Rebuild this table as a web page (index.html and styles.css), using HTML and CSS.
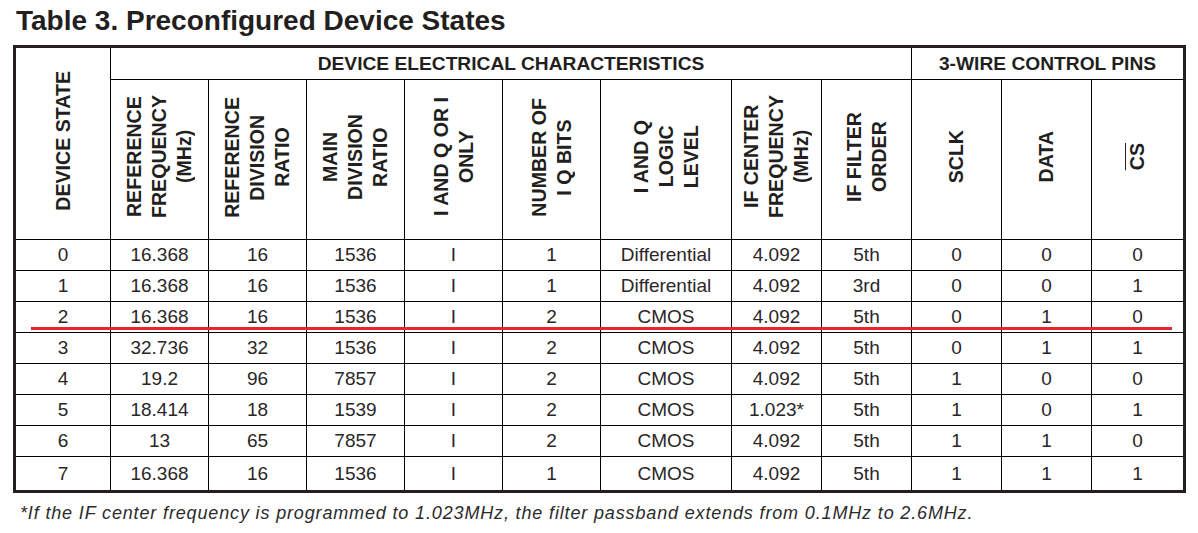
FILE: index.html
```html
<!DOCTYPE html>
<html lang="en">
<head>
<meta charset="utf-8">
<title>Table 3. Preconfigured Device States</title>
<link rel="stylesheet" href="styles.css">
</head>
<body>
<div class="page">
  <h1 class="title">Table 3. Preconfigured Device States</h1>
  <div class="table-wrap">
    <table class="states">
      <colgroup>
        <col class="c-state">
        <col class="c-main"><col class="c-main"><col class="c-main"><col class="c-main"><col class="c-main">
        <col class="c-logic">
        <col class="c-narrow"><col class="c-narrow"><col class="c-narrow"><col class="c-narrow"><col class="c-last">
      </colgroup>
      <thead>
        <tr class="group-row">
          <th rowspan="2" class="vcell"><span class="vtext">DEVICE STATE</span></th>
          <th colspan="8" class="group">DEVICE ELECTRICAL CHARACTERISTICS</th>
          <th colspan="3" class="group end">3-WIRE CONTROL PINS</th>
        </tr>
        <tr class="label-row">
          <th class="vcell"><span class="vtext">REFERENCE<br>FREQUENCY<br>(MHz)</span></th>
          <th class="vcell"><span class="vtext">REFERENCE<br>DIVISION<br>RATIO</span></th>
          <th class="vcell"><span class="vtext">MAIN<br>DIVISION<br>RATIO</span></th>
          <th class="vcell"><span class="vtext">I AND Q OR I<br>ONLY</span></th>
          <th class="vcell"><span class="vtext">NUMBER OF<br>I Q BITS</span></th>
          <th class="vcell"><span class="vtext">I AND Q<br>LOGIC<br>LEVEL</span></th>
          <th class="vcell"><span class="vtext">IF CENTER<br>FREQUENCY<br>(MHz)</span></th>
          <th class="vcell"><span class="vtext">IF FILTER<br>ORDER</span></th>
          <th class="vcell"><span class="vtext">SCLK</span></th>
          <th class="vcell"><span class="vtext">DATA</span></th>
          <th class="vcell end"><span class="vtext"><span class="bar">CS</span></span></th>
        </tr>
      </thead>
      <tbody>
        <tr><td>0</td><td>16.368</td><td>16</td><td>1536</td><td>I</td><td>1</td><td>Differential</td><td>4.092</td><td>5th</td><td>0</td><td>0</td><td class="end">0</td></tr>
        <tr><td>1</td><td>16.368</td><td>16</td><td>1536</td><td>I</td><td>1</td><td>Differential</td><td>4.092</td><td>3rd</td><td>0</td><td>0</td><td class="end">1</td></tr>
        <tr><td>2</td><td>16.368</td><td>16</td><td>1536</td><td>I</td><td>2</td><td>CMOS</td><td>4.092</td><td>5th</td><td>0</td><td>1</td><td class="end">0</td></tr>
        <tr><td>3</td><td>32.736</td><td>32</td><td>1536</td><td>I</td><td>2</td><td>CMOS</td><td>4.092</td><td>5th</td><td>0</td><td>1</td><td class="end">1</td></tr>
        <tr><td>4</td><td>19.2</td><td>96</td><td>7857</td><td>I</td><td>2</td><td>CMOS</td><td>4.092</td><td>5th</td><td>1</td><td>0</td><td class="end">0</td></tr>
        <tr><td>5</td><td>18.414</td><td>18</td><td>1539</td><td>I</td><td>2</td><td>CMOS</td><td>1.023*</td><td>5th</td><td>1</td><td>0</td><td class="end">1</td></tr>
        <tr><td>6</td><td>13</td><td>65</td><td>7857</td><td>I</td><td>2</td><td>CMOS</td><td>4.092</td><td>5th</td><td>1</td><td>1</td><td class="end">0</td></tr>
        <tr class="last"><td>7</td><td>16.368</td><td>16</td><td>1536</td><td>I</td><td>1</td><td>CMOS</td><td>4.092</td><td>5th</td><td>1</td><td>1</td><td class="end">1</td></tr>
      </tbody>
    </table>
    <div class="highlight"></div>
  </div>
  <p class="note">*If the IF center frequency is programmed to 1.023MHz, the filter passband extends from 0.1MHz to 2.6MHz.</p>
</div>
</body>
</html>
```
FILE: styles.css
```css
* { box-sizing: border-box; }

html, body {
  margin: 0;
  padding: 0;
  background: #ffffff;
}

body {
  font-family: "Liberation Sans", Arial, sans-serif;
  color: #231f20;
}

.page {
  padding: 5px 0 0 13px;
}

.title {
  margin: 0 0 8px 3px;
  font-size: 28px;
  line-height: 32px;
  font-weight: bold;
  color: #231f20;
}

.table-wrap {
  position: relative;
  width: 1173px;
}

.states {
  width: 1173px;
  table-layout: fixed;
  border-collapse: separate;
  border-spacing: 0;
  border: 3px solid #231f20;
}

.c-state { width: 95px; }
.c-main { width: 98px; }
.c-logic { width: 131px; }
.c-narrow { width: 90px; }
.c-last { width: 91px; }

.states th,
.states td {
  padding: 0;
  border-right: 1px solid #000;
  border-bottom: 1px solid #000;
  text-align: center;
  vertical-align: middle;
}

.states .end { border-right: none; }
.states tr.last td { border-bottom: none; }

.states th {
  font-size: 19.2px;
  font-weight: bold;
  color: #231f20;
}

.group-row { height: 32px; }
.label-row { height: 160px; }

.states tbody tr { height: 31px; }
.states tbody tr.last { height: 33px; }

.states td {
  font-size: 19px;
  font-weight: normal;
  color: #2a2628;
}

.vtext {
  display: inline-block;
  writing-mode: vertical-rl;
  transform: rotate(180deg);
  font-size: 19.6px;
  line-height: 25px;
  text-align: center;
  white-space: nowrap;
}

.bar {
  text-decoration: overline;
  text-decoration-thickness: 1px;
}

.highlight {
  position: absolute;
  left: 18px;
  top: 282px;
  width: 1141px;
  height: 3px;
  background: #e8242c;
}

.note {
  margin: 10px 0 0 7px;
  font-size: 18px;
  line-height: 20px;
  font-style: italic;
  letter-spacing: 0.85px;
  color: #2b2b2b;
}
```
